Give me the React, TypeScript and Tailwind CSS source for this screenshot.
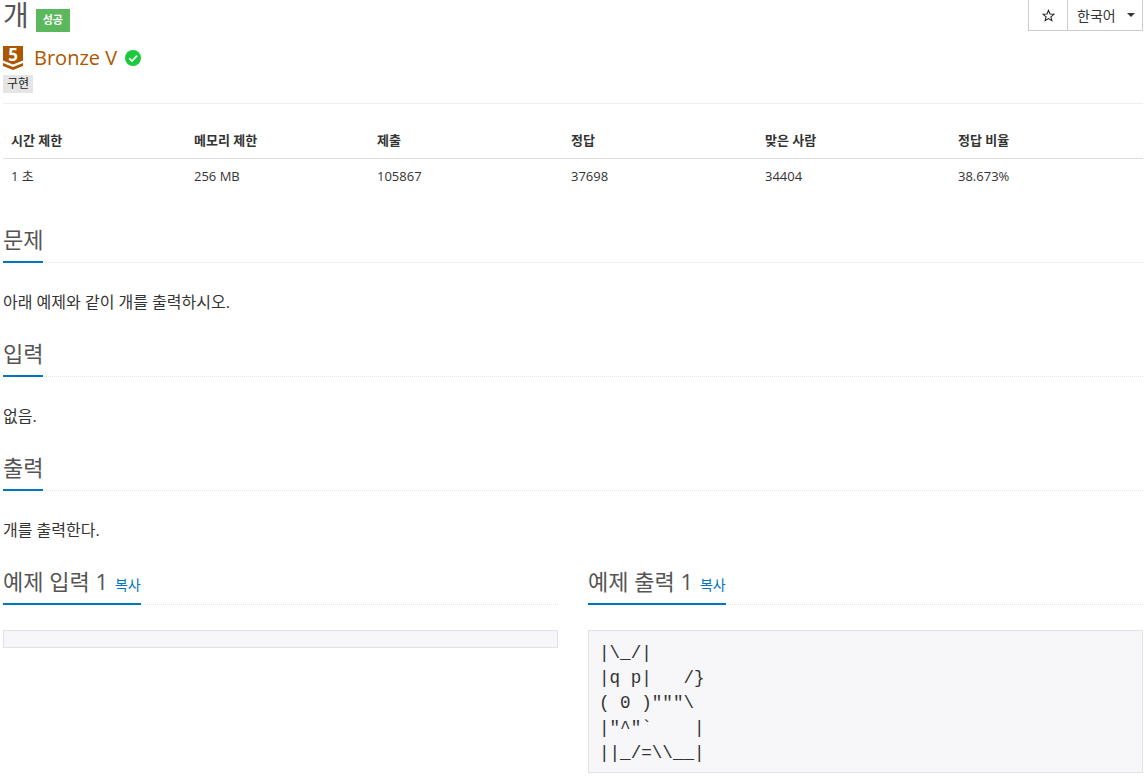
const font = { fontFamily: '"Open Sans", "Noto Sans CJK KR", sans-serif' };

const Headline = ({ title, copy }: { title: string; copy?: boolean }) => (
  <div className="border-b border-dotted border-[#e5e5e5] h-[39px]">
    <div className="inline-flex items-baseline h-[39px] border-b-2 border-[#0076c0] text-[22px] leading-[30px] text-[#555]">
      {title}
      {copy && <a className="ml-[7px] text-[14px] text-[#0076c0]">복사</a>}
    </div>
  </div>
);

const Section = ({ title, text }: { title: string; text: string }) => (
  <section className="h-[114px]">
    <Headline title={title} />
    <p className="mt-[29px] text-[16px] leading-[20px] text-[#333]">{text}</p>
  </section>
);

const headers = ['시간 제한', '메모리 제한', '제출', '정답', '맞은 사람', '정답 비율'];
const widths = ['w-[183px]', 'w-[183px]', 'w-[194px]', 'w-[194px]', 'w-[193px]', 'w-[193px]'];
const values = ['256 MB', '105867', '37698', '34404', '38.673%'];

const asciiDog = `|\\_/|
|q p|   /}
( 0 )"""\\
|"^"\`    |
||_/=\\\\__|`;

const App = () => {
  return (
    <div style={font} className="w-[1148px] h-[778px] overflow-hidden bg-white pl-[3px] pr-[5px] text-[#333]">
      <div className="relative">
        <div className="flex items-start h-[36px]">
          <h1 className="text-[28px] leading-[30px] text-[#555]">개</h1>
          <span className="ml-[7px] mt-[9px] h-[23px] w-[34px] flex items-center justify-center bg-[#5cb85c] text-white text-[11px] font-bold">
            성공
          </span>
        </div>
        <div className="absolute right-0 top-[-1px] flex h-[32px] border border-[#ccc] text-[14px] text-[#333]">
          <div className="w-[39px] flex items-center justify-center border-r border-[#ccc]">
            <svg width="13" height="13" viewBox="0 0 24 24" fill="none" stroke="#222" strokeWidth="2">
              <path d="M12 2.5L14.8 9.2L22 9.8L16.5 14.5L18.2 21.6L12 17.8L5.8 21.6L7.5 14.5L2 9.8L9.2 9.2Z" />
            </svg>
          </div>
          <div className="w-[74px] flex items-center pl-[9px]">
            한국어
            <span className="ml-[11px] border-x-[4px] border-t-[4px] border-x-transparent border-t-[#333]" />
          </div>
        </div>
      </div>

      <div className="flex items-center h-[28px] mt-[8px]">
        <svg width="20" height="24" viewBox="0 0 20 24" className="shrink-0 overflow-visible">
          <path d="M0 0H20V14.5L10 18.5L0 14.5Z" fill="#ad5600" />
          <path d="M0 17L10 21L20 17V20L10 24L0 20Z" fill="#ad5600" />
          <text x="10" y="15" textAnchor="middle" fontSize="17" fontWeight="700" fill="#fff" fontFamily="Open Sans">5</text>
        </svg>
        <span className="ml-[11px] text-[20px] text-[#ad5600]">Bronze V</span>
        <svg width="16" height="16" viewBox="0 0 16 16" className="ml-[8px]">
          <circle cx="8" cy="8" r="8" fill="#1bc93d" />
          <path d="M4.2 8.3L7 11L12 5.6" stroke="#fff" strokeWidth="1.7" fill="none" />
        </svg>
      </div>

      <div className="mt-[3px] h-[18px] w-[30px] bg-[#e5e5e5] text-center text-[12px] leading-[18px] text-[#222]">구현</div>

      <div className="mt-[10px] border-t border-[#eee]" />

      <table className="mt-[20px] w-full table-fixed text-[13px]">
        <thead>
          <tr className="h-[34px] border-b border-[#ddd]">
            {headers.map((h, i) => (
              <th key={h} className={`${widths[i]} px-[8px] text-left font-bold text-[#333]`}>{h}</th>
            ))}
          </tr>
        </thead>
        <tbody>
          <tr className="h-[36px]">
            <td className="px-[8px]">1 초</td>
            {values.map((v) => (
              <td key={v} className="px-[8px]">{v}</td>
            ))}
          </tr>
        </tbody>
      </table>

      <div className="mt-[30px]">
        <Section title="문제" text="아래 예제와 같이 개를 출력하시오." />
        <Section title="입력" text="없음." />
        <Section title="출력" text="개를 출력한다." />
      </div>

      <div className="grid grid-cols-2 gap-[30px]">
        <div>
          <Headline title="예제 입력 1" copy />
          <pre className="mt-[25px] h-[18px] border border-[#e1e1e8] bg-[#f7f7f9]" />
        </div>
        <div>
          <Headline title="예제 출력 1" copy />
          <pre className="mt-[25px] h-[143px] border border-[#e1e1e8] bg-[#f7f7f9] px-[10px] pt-[10px] text-[17.6px] leading-[25px] text-[#333] font-['Liberation_Mono',monospace]">
            {asciiDog}
          </pre>
        </div>
      </div>
    </div>
  );
};

export default App;
